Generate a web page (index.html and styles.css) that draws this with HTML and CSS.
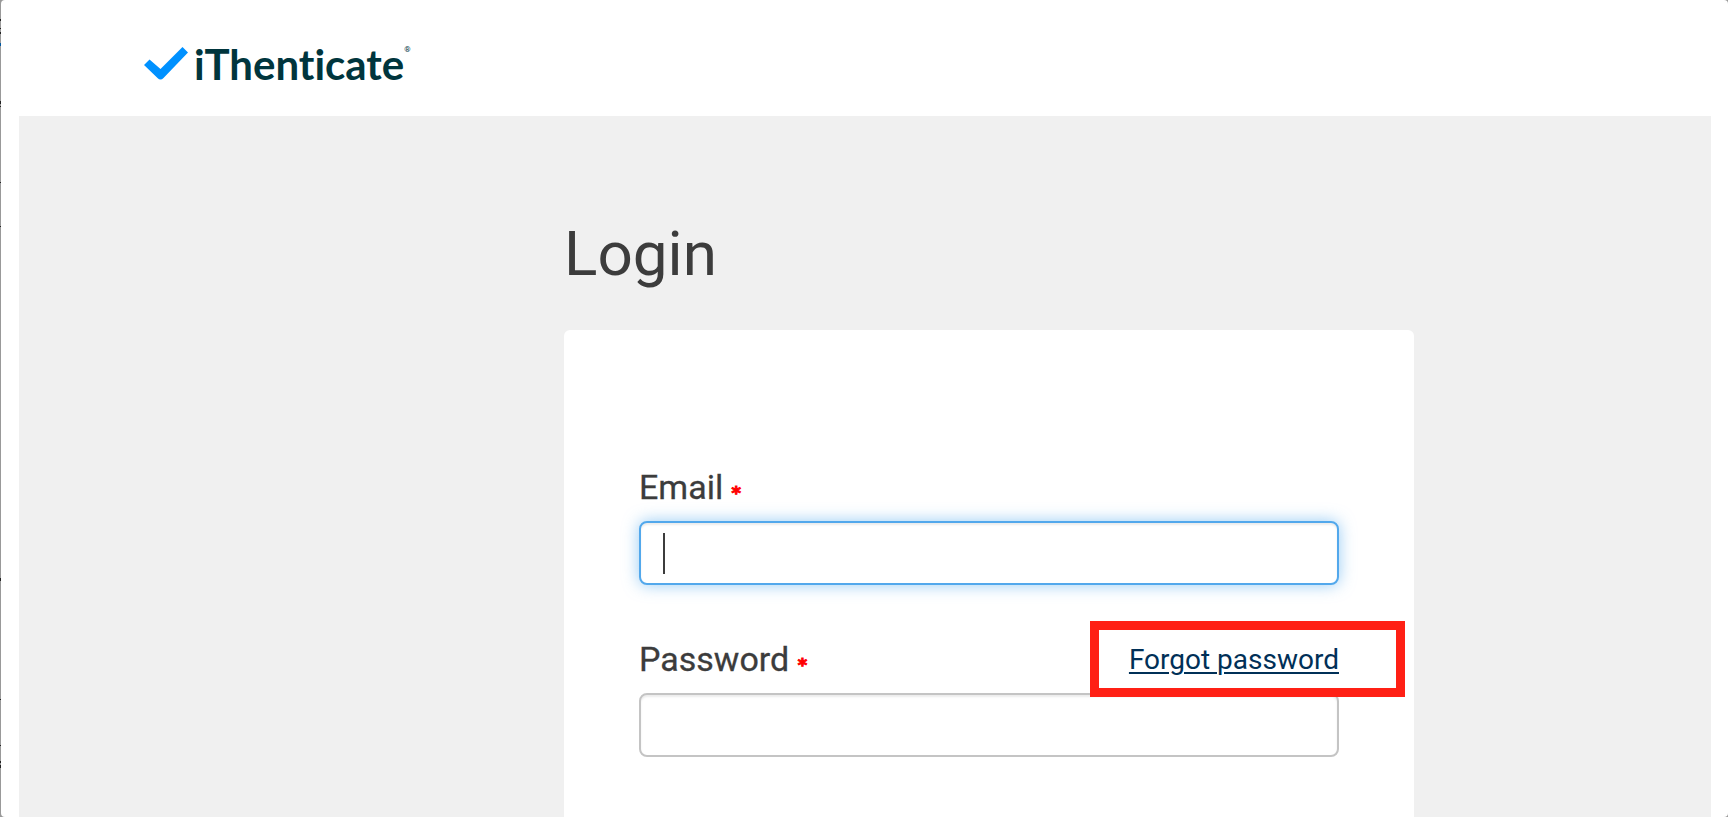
FILE: index.html
```
<!DOCTYPE html>
<html lang="en">
<head>
    <meta charset="UTF-8">
    <meta name="viewport" content="width=device-width, initial-scale=1.0">
    <title>iThenticate</title>
    <link rel="stylesheet" href="styles.css">
</head>
<body>
    <div class="page">
        <header class="header">
            <a href="#" class="logo">
                <svg class="logo-check" viewBox="0 0 44 33" aria-hidden="true">
                    <path d="M38.5 0 44 5.5 19.5 31Q16.500 34 13.500 31L0 18 5.500 12.500 16.500 22Z" fill="#0091ff"/>
                </svg>
                <span class="logo-text">iThenticate</span>
                <sup class="logo-mark">®</sup>
            </a>
        </header>
        <main class="main">
            <div class="login">
                <h1>Login</h1>
                <form class="card">
                    <div class="field">
                        <div class="field-head">
                            <label for="email">Email <span class="required">*</span></label>
                        </div>
                        <div class="input-wrap">
                            <input class="focused" type="email" id="email" name="email">
                            <span class="caret"></span>
                        </div>
                    </div>
                    <div class="field">
                        <div class="field-head">
                            <label for="password">Password <span class="required">*</span></label>
                            <a href="#" class="forgot">Forgot password</a>
                        </div>
                        <input type="password" id="password" name="password">
                    </div>
                </form>
            </div>
        </main>
    </div>
</body>
</html>
```

FILE: styles.css
```
*{
    box-sizing: border-box;
}
body{
    margin: 0;
    /* dark ticks along the left edge */
    background: linear-gradient(#999 19px, #222 19px 21px, #999 21px 28px, #222 28px 29px, #999 29px 32px, #222 32px 34px, #999 34px 43px, #0057a0 43px 46px, #999 46px 101px, #222 101px 104px, #999 104px 106px, #222 106px 107px, #999 107px 182px, #222 182px 183px, #999 183px 226px, #222 226px 227px, #999 227px 578px, #222 578px 581px, #999 581px 699px, #222 699px 700px, #999 700px 745px, #222 745px 746px, #999 746px 761px, #222 761px 763px, #999 763px 765px, #222 765px 768px, #999 768px);
    color: #3c3c3c;
    font-family: Roboto, sans-serif;
}
.page{
    display: flex;
    flex-direction: column;
    min-height: 100vh;
    margin-left: 1px;
    padding: 0 17px 0 18px;
    background: #fff;
    border-radius: 4px;
}
.header{
    height: 116px;
    padding: 40px 125px 0;
}
.logo{
    display: inline-flex;
    align-items: flex-start;
    color: #00353d;
    text-decoration: none;
}
.logo-check{
    width: 44px;
    height: 33px;
    margin-top: 7px;
}
.logo-text{
    margin-left: 6px;
    font: bold 42px/48px Lato, sans-serif;
    font-variant-ligatures: none;
}
.logo-mark{
    font-size: 8px;
    line-height: 20px;
}
.main{
    flex: 1;
    display: grid;
    grid-template-columns: 545fr 850fr 297fr;
    background: #f0f0f0;
}
.login{
    grid-column: 2;
    display: flex;
    flex-direction: column;
}
h1{
    margin: 100px 0 38px;
    font-size: 62px;
    font-weight: 400;
    line-height: 76px;
}
.card{
    flex: 1;
    padding: 135px 75px 0;
    background: #fff;
    border-radius: 6px 6px 0 0;
}
.field{
    margin-bottom: 52px;
}
.field-head{
    display: flex;
    justify-content: space-between;
    align-items: center;
    height: 44px;
    margin-bottom: 12px;
}
label{
    font-size: 34px;
    -webkit-text-stroke: 0.3px #3c3c3c;
}
.required{
    color: #f00;
    font: bold 18px "DejaVu Sans", sans-serif;
    -webkit-text-stroke: 1px #f00;
}
.input-wrap{
    position: relative;
}
input{
    display: block;
    width: 100%;
    height: 64px;
    padding: 0 24px;
    border: 2px solid #c4c4c4;
    border-radius: 8px;
    box-shadow: inset 0 2px 2px rgba(0,0,0,.08);
    font: 28px Roboto, sans-serif;
    outline: none;
}
input.focused{
    border-color: #52a8ec;
    box-shadow: inset 0 2px 2px rgba(0,0,0,.08), 0 0 16px rgba(82,168,236,.6);
}
.caret{
    position: absolute;
    left: 24px;
    top: 12px;
    width: 2px;
    height: 41px;
    background: #3c3c3c;
}
.forgot{
    position: relative;
    color: #003057;
    font-size: 28px;
    text-underline-offset: 3px;
    text-decoration-thickness: 2px;
}
/* red frame around the link */
.forgot::before{
    content: "";
    position: absolute;
    top: -22px;
    right: -66px;
    bottom: -21px;
    left: -39px;
    border: 9px solid #ff2015;
}
@media (max-height: 900px){
    .field:last-child{
        margin-bottom: 0;
    }
}
```
